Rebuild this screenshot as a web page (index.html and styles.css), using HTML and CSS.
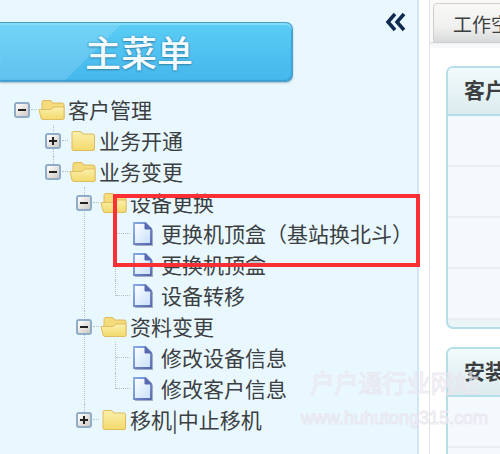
FILE: index.html
```html
<!DOCTYPE html>
<html lang="zh-CN">
<head>
    <meta charset="UTF-8">
    <meta name="viewport" content="width=device-width, initial-scale=1.0">
    <title>主菜单</title>
    <link rel="stylesheet" href="styles.css">
</head>
<body>

<!-- Iconos compartidos del árbol -->
<svg class="sprite" aria-hidden="true">
    <defs>
        <linearGradient id="folderFill" x1="0" y1="0" x2="0" y2="1">
            <stop offset="0" stop-color="#fbf0ad"/>
            <stop offset="1" stop-color="#f3da6c"/>
        </linearGradient>
        <linearGradient id="pageFill" x1="0" y1="0" x2="1" y2="1">
            <stop offset="0" stop-color="#ffffff"/>
            <stop offset="1" stop-color="#c6dffa"/>
        </linearGradient>
        <linearGradient id="pageEdge" x1="0" y1="0" x2="1" y2="1">
            <stop offset="0" stop-color="#85a9e6"/>
            <stop offset="1" stop-color="#5666ab"/>
        </linearGradient>
    </defs>
    <symbol id="folder-open" viewBox="0 0 28 22">
        <path d="M4 20V3.500Q4 1.500 6 1.500H12Q13.500 1.500 14 3L14.500 4H24Q26 4 26 6V20Z" fill="#f4dc7c" stroke="#dfb95c"/>
        <path d="M1 10.500H13L16 8H26V18.500Q26 20.500 24 20.500H5Q3.500 20.500 3 19Z" fill="url(#folderFill)" stroke="#e0bd60"/>
    </symbol>
    <symbol id="folder" viewBox="0 0 28 22">
        <path d="M3 19V3Q3 1.500 4.500 1.500H11Q12.500 1.500 13 3L13.500 4H24Q25.500 4 25.500 6V19Q25.500 20.500 24 20.500H4.500Q3 20.500 3 19Z" fill="url(#folderFill)" stroke="#dfb95c"/>
    </symbol>
    <symbol id="page" viewBox="0 0 22 26">
        <path d="M3 3H15L21 9V25H3Z" fill="#777b98" opacity=".6"/>
        <path d="M2 2H13.500L19 7.500V23H2Z" fill="url(#pageFill)" stroke="url(#pageEdge)" stroke-width="1.800"/>
        <path d="M13 2V8H19Z" fill="#5969b0" stroke="#5969b0"/>
    </symbol>
</svg>

<div class="page">
    <aside class="sidebar">
        <div class="sidebar-header">
            <h1 class="menu-title">主菜单</h1>
            <button class="collapse" type="button" aria-label="收起">
                <svg viewBox="0 0 22 20"><path d="M10 2L3 10L10 18M19 2L12 10L19 18" fill="none" stroke="#10294f" stroke-width="3.500"/></svg>
            </button>
        </div>

        <ul class="tree">
            <li>
                <div class="node"><button class="toggle minus" type="button" aria-label="折叠"></button><svg class="folder"><use href="#folder-open"/></svg><a href="#">客户管理</a></div>
                <ul>
                    <li>
                        <div class="node"><button class="toggle plus" type="button" aria-label="展开"></button><svg class="folder"><use href="#folder"/></svg><a href="#">业务开通</a></div>
                    </li>
                    <li>
                        <div class="node"><button class="toggle minus" type="button" aria-label="折叠"></button><svg class="folder"><use href="#folder-open"/></svg><a href="#">业务变更</a></div>
                        <ul>
                            <li>
                                <div class="node"><button class="toggle minus" type="button" aria-label="折叠"></button><svg class="folder"><use href="#folder-open"/></svg><a href="#">设备更换</a></div>
                                <ul>
                                    <li class="marked"><div class="node leaf"><svg class="file"><use href="#page"/></svg><a href="#">更换机顶盒（基站换北斗）</a></div></li>
                                    <li><div class="node leaf"><svg class="file"><use href="#page"/></svg><a href="#">更换机顶盒</a></div></li>
                                    <li><div class="node leaf"><svg class="file"><use href="#page"/></svg><a href="#">设备转移</a></div></li>
                                </ul>
                            </li>
                            <li>
                                <div class="node"><button class="toggle minus" type="button" aria-label="折叠"></button><svg class="folder"><use href="#folder-open"/></svg><a href="#">资料变更</a></div>
                                <ul>
                                    <li><div class="node leaf"><svg class="file"><use href="#page"/></svg><a href="#">修改设备信息</a></div></li>
                                    <li><div class="node leaf"><svg class="file"><use href="#page"/></svg><a href="#">修改客户信息</a></div></li>
                                </ul>
                            </li>
                            <li>
                                <div class="node"><button class="toggle plus" type="button" aria-label="展开"></button><svg class="folder"><use href="#folder"/></svg><a href="#">移机|中止移机</a></div>
                            </li>
                        </ul>
                    </li>
                </ul>
            </li>
        </ul>
    </aside>

    <main class="workspace">
        <div class="tabs">
            <button class="tab" type="button">工作空间</button>
        </div>
        <section class="panel">
            <h2>客户信息</h2>
            <div class="line"></div>
            <div class="line"></div>
            <div class="line"></div>
            <div class="line"></div>
        </section>
        <section class="panel">
            <h2>安装信息</h2>
            <div class="line"></div>
            <div class="line"></div>
        </section>
    </main>

    <div class="watermark">
        <span>户户通行业网站</span>
        <span class="site">www.huhutong315.com</span>
    </div>
</div>

</body>
</html>
```
FILE: styles.css
```css
* {
    box-sizing: border-box;
}
body {
    margin: 0;
    font-family: "Noto Sans CJK SC", sans-serif;
    font-size: 21px;
    color: #3b3f42;
    background-color: #ffffff;
}
.sprite {
    position: absolute;
    width: 0;
    height: 0;
}
.page {
    position: relative;
    display: flex;
    height: 100vh;
    overflow: hidden;
}
.sidebar {
    flex: 0 0 419px;
    background-color: #e9f7fe;
    border-right: 2px solid #cfe6fa;
}
.sidebar-header {
    display: flex;
    justify-content: space-between;
    align-items: flex-start;
    padding: 12px 10px 12px 0;
}
.menu-title {
    flex: 0 0 293px;
    height: 60px;
    margin: 10px 0 0;
    padding-right: 14px;
    border: 1px solid #4a9fcb;
    border-left: none;
    border-radius: 0 7px 7px 0;
    background: linear-gradient(135deg, rgba(255, 255, 255, 0.14) 35%, rgba(255, 255, 255, 0) 35%), linear-gradient(#5acdf5, #45b7ec);
    box-shadow: inset 0 2px 1px #85dcf7, inset -1px -1px 1px #3a9dd4, 0 1px 2px #a9bcc7;
    color: #f2fbff;
    font-size: 36px;
    font-weight: 500;
    line-height: 56px;
    text-align: center;
    text-shadow: 0 0 2px #3787b0, 0 1px 2px #3787b0;
}
.collapse {
    width: 22px;
    height: 20px;
    padding: 0;
    border: none;
    background: none;
    cursor: pointer;
}
.collapse svg {
    display: block;
    width: 22px;
    height: 20px;
}
.tree, .tree ul {
    margin: 0;
    padding: 0;
    list-style: none;
}
.tree {
    padding-left: 14px;
}
.tree ul {
    padding-left: 31px;
}
.tree li {
    position: relative;
}
/* líneas punteadas entre nodos */
.tree ul > li::before {
    content: "";
    position: absolute;
    top: 0;
    bottom: 0;
    left: 8px;
    border-left: 1px dotted #b5bfc5;
}
.tree ul > li:last-child::before {
    bottom: auto;
    height: 16px;
}
.node {
    position: relative;
    display: flex;
    align-items: center;
    height: 31px;
    white-space: nowrap;
}
.node::before {
    content: "";
    order: 1;
    width: 6px;
    margin: 0 1px;
    border-top: 1px dotted #b5bfc5;
}
.node a {
    order: 3;
    color: inherit;
    line-height: 31px;
    text-decoration: none;
}
.toggle {
    width: 16px;
    height: 16px;
    padding: 0;
    border: 2px solid #8fadc8;
    border-radius: 3px;
    background: linear-gradient(#222222, #222222) center / 8px 2px no-repeat, linear-gradient(135deg, #ffffff, #cfc9c0);
    cursor: pointer;
}
.toggle.plus {
    background: linear-gradient(#222222, #222222) center / 8px 2px no-repeat, linear-gradient(#222222, #222222) center / 2px 8px no-repeat, linear-gradient(135deg, #ffffff, #cfc9c0);
}
.folder {
    order: 2;
    width: 28px;
    height: 22px;
    margin-right: 2px;
}
.file {
    order: 2;
    width: 22px;
    height: 26px;
    margin-right: 7px;
}
.leaf::before {
    width: 14px;
    margin: 0 2px 0 9px;
}
.marked::after {
    content: "";
    position: absolute;
    top: -24px;
    right: -3px;
    bottom: -18px;
    left: 6px;
    z-index: 1;
    border: 4px solid #fc3034;
    pointer-events: none;
}
.workspace {
    flex: 1;
    min-width: 0;
    margin-left: 10px;
    border-left: 1px solid #e2e2e4;
    overflow: hidden;
    white-space: nowrap;
}
.tabs {
    display: flex;
    height: 48px;
    padding: 3px 0 5px 3px;
    background: linear-gradient(#fbf8f6 42px, #d9dadb 42px, #f7f8fa 44px);
}
.tab {
    flex: none;
    padding: 0 19px;
    border: 1px solid #cfcfcf;
    border-radius: 4px 4px 0 0;
    background: linear-gradient(#f9f8f6, #f0f0ef 60%, #d8d9da);
    color: #3b3f42;
    font-family: inherit;
    font-size: 19px;
}
.panel {
    margin: 18px 0 0 16px;
    padding-bottom: 7px;
    border: 2px solid #b5dfe8;
    border-right: none;
    border-radius: 7px 0 0 7px;
    background-color: #e9f5f7;
    overflow: hidden;
}
.panel h2 {
    height: 48px;
    margin: 0;
    padding-left: 16px;
    border-bottom: 2px solid #b5dfe8;
    background: linear-gradient(#f1fafc, #dcebef);
    font-size: 21px;
    line-height: 42px;
}
.line {
    height: 51px;
    border-bottom: 2px solid #ebedef;
    background-color: #f4f9fd;
}
.watermark {
    position: absolute;
    right: 12px;
    bottom: 18px;
    z-index: 2;
    display: flex;
    flex-direction: column;
    align-items: center;
    color: rgba(240, 248, 253, 0.6);
    font-size: 24px;
    line-height: 36px;
    -webkit-text-stroke: 1px rgba(232, 224, 234, 0.7);
    pointer-events: none;
}
.site {
    font-family: "Liberation Sans", sans-serif;
    font-size: 18px;
}
```
